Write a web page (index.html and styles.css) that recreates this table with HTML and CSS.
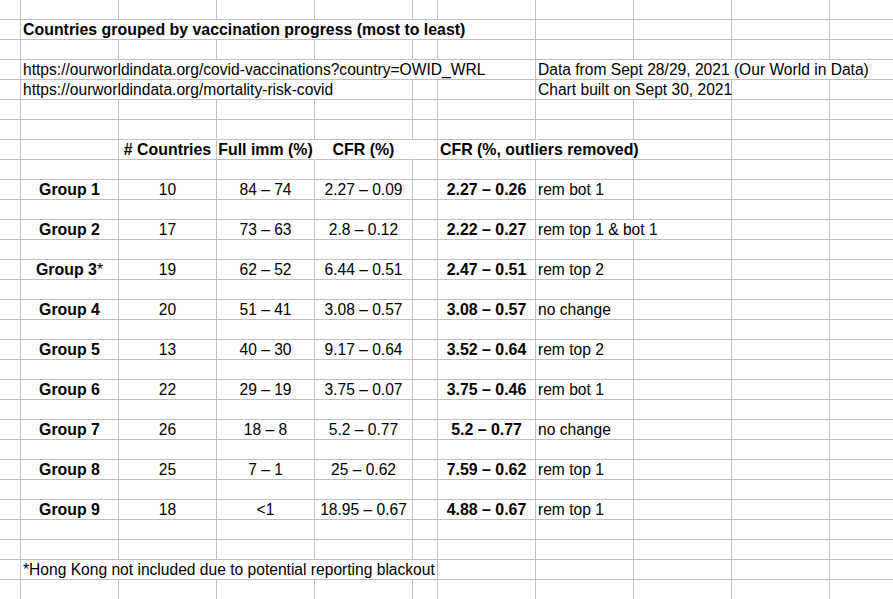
FILE: index.html
```html
<!DOCTYPE html>
<html lang="en">
<head>
<meta charset="utf-8">
<title>Countries grouped by vaccination progress</title>
<link rel="stylesheet" href="styles.css">
</head>
<body>
<div class="sheet">
  <!-- row 1 -->
  <div class="c"></div><div class="c"></div><div class="c"></div><div class="c"></div><div class="c"></div><div class="c"></div><div class="c"></div><div class="c"></div><div class="c"></div><div class="c"></div><div class="c"></div>
  <!-- row 2 -->
  <div class="c"></div><div class="c s6 b">Countries grouped by vaccination progress (most to least)</div><div class="c"></div><div class="c"></div><div class="c"></div><div class="c"></div>
  <!-- row 3 -->
  <div class="c"></div><div class="c"></div><div class="c"></div><div class="c"></div><div class="c"></div><div class="c"></div><div class="c"></div><div class="c"></div><div class="c"></div><div class="c"></div><div class="c"></div>
  <!-- row 4 -->
  <div class="c"></div><div class="c s6">https://ourworldindata.org/covid-vaccinations?country=OWID_WRL</div><div class="c s4">Data from Sept 28/29, 2021 (Our World in Data)</div>
  <!-- row 5 -->
  <div class="c"></div><div class="c s4">https://ourworldindata.org/mortality-risk-covid</div><div class="c"></div><div class="c"></div><div class="c s2">Chart built on Sept 30, 2021</div><div class="c"></div><div class="c"></div>
  <!-- row 6 -->
  <div class="c"></div><div class="c"></div><div class="c"></div><div class="c"></div><div class="c"></div><div class="c"></div><div class="c"></div><div class="c"></div><div class="c"></div><div class="c"></div><div class="c"></div>
  <!-- row 7 -->
  <div class="c"></div><div class="c"></div><div class="c"></div><div class="c"></div><div class="c"></div><div class="c"></div><div class="c"></div><div class="c"></div><div class="c"></div><div class="c"></div><div class="c"></div>
  <!-- row 8: header -->
  <div class="c"></div><div class="c"></div><div class="c b m"># Countries</div><div class="c b m nr">Full imm (%)</div><div class="c b m nr">CFR (%)</div><div class="c"></div><div class="c s3 b">CFR (%, outliers removed)</div><div class="c"></div><div class="c"></div>
  <!-- row 9 -->
  <div class="c"></div><div class="c"></div><div class="c"></div><div class="c"></div><div class="c"></div><div class="c"></div><div class="c"></div><div class="c"></div><div class="c"></div><div class="c"></div><div class="c"></div>
  <!-- Group 1 -->
  <div class="c"></div><div class="c b m">Group 1</div><div class="c m">10</div><div class="c m">84 – 74</div><div class="c m">2.27 – 0.09</div><div class="c"></div><div class="c b m">2.27 – 0.26</div><div class="c">rem bot 1</div><div class="c"></div><div class="c"></div><div class="c"></div>
  <div class="c"></div><div class="c"></div><div class="c"></div><div class="c"></div><div class="c"></div><div class="c"></div><div class="c"></div><div class="c"></div><div class="c"></div><div class="c"></div><div class="c"></div>
  <!-- Group 2 -->
  <div class="c"></div><div class="c b m">Group 2</div><div class="c m">17</div><div class="c m">73 – 63</div><div class="c m">2.8 – 0.12</div><div class="c"></div><div class="c b m">2.22 – 0.27</div><div class="c s2">rem top 1 &amp; bot 1</div><div class="c"></div><div class="c"></div>
  <div class="c"></div><div class="c"></div><div class="c"></div><div class="c"></div><div class="c"></div><div class="c"></div><div class="c"></div><div class="c"></div><div class="c"></div><div class="c"></div><div class="c"></div>
  <!-- Group 3 -->
  <div class="c"></div><div class="c b m">Group 3<span class="n">*</span></div><div class="c m">19</div><div class="c m">62 – 52</div><div class="c m">6.44 – 0.51</div><div class="c"></div><div class="c b m">2.47 – 0.51</div><div class="c">rem top 2</div><div class="c"></div><div class="c"></div><div class="c"></div>
  <div class="c"></div><div class="c"></div><div class="c"></div><div class="c"></div><div class="c"></div><div class="c"></div><div class="c"></div><div class="c"></div><div class="c"></div><div class="c"></div><div class="c"></div>
  <!-- Group 4 -->
  <div class="c"></div><div class="c b m">Group 4</div><div class="c m">20</div><div class="c m">51 – 41</div><div class="c m">3.08 – 0.57</div><div class="c"></div><div class="c b m">3.08 – 0.57</div><div class="c">no change</div><div class="c"></div><div class="c"></div><div class="c"></div>
  <div class="c"></div><div class="c"></div><div class="c"></div><div class="c"></div><div class="c"></div><div class="c"></div><div class="c"></div><div class="c"></div><div class="c"></div><div class="c"></div><div class="c"></div>
  <!-- Group 5 -->
  <div class="c"></div><div class="c b m">Group 5</div><div class="c m">13</div><div class="c m">40 – 30</div><div class="c m">9.17 – 0.64</div><div class="c"></div><div class="c b m">3.52 – 0.64</div><div class="c">rem top 2</div><div class="c"></div><div class="c"></div><div class="c"></div>
  <div class="c"></div><div class="c"></div><div class="c"></div><div class="c"></div><div class="c"></div><div class="c"></div><div class="c"></div><div class="c"></div><div class="c"></div><div class="c"></div><div class="c"></div>
  <!-- Group 6 -->
  <div class="c"></div><div class="c b m">Group 6</div><div class="c m">22</div><div class="c m">29 – 19</div><div class="c m">3.75 – 0.07</div><div class="c"></div><div class="c b m">3.75 – 0.46</div><div class="c">rem bot 1</div><div class="c"></div><div class="c"></div><div class="c"></div>
  <div class="c"></div><div class="c"></div><div class="c"></div><div class="c"></div><div class="c"></div><div class="c"></div><div class="c"></div><div class="c"></div><div class="c"></div><div class="c"></div><div class="c"></div>
  <!-- Group 7 -->
  <div class="c"></div><div class="c b m">Group 7</div><div class="c m">26</div><div class="c m">18 – 8</div><div class="c m">5.2 – 0.77</div><div class="c"></div><div class="c b m">5.2 – 0.77</div><div class="c">no change</div><div class="c"></div><div class="c"></div><div class="c"></div>
  <div class="c"></div><div class="c"></div><div class="c"></div><div class="c"></div><div class="c"></div><div class="c"></div><div class="c"></div><div class="c"></div><div class="c"></div><div class="c"></div><div class="c"></div>
  <!-- Group 8 -->
  <div class="c"></div><div class="c b m">Group 8</div><div class="c m">25</div><div class="c m">7 – 1</div><div class="c m">25 – 0.62</div><div class="c"></div><div class="c b m">7.59 – 0.62</div><div class="c">rem top 1</div><div class="c"></div><div class="c"></div><div class="c"></div>
  <div class="c"></div><div class="c"></div><div class="c"></div><div class="c"></div><div class="c"></div><div class="c"></div><div class="c"></div><div class="c"></div><div class="c"></div><div class="c"></div><div class="c"></div>
  <!-- Group 9 -->
  <div class="c"></div><div class="c b m">Group 9</div><div class="c m">18</div><div class="c m">&lt;1</div><div class="c m">18.95 – 0.67</div><div class="c"></div><div class="c b m">4.88 – 0.67</div><div class="c">rem top 1</div><div class="c"></div><div class="c"></div><div class="c"></div>
  <!-- rows 27-28 -->
  <div class="c"></div><div class="c"></div><div class="c"></div><div class="c"></div><div class="c"></div><div class="c"></div><div class="c"></div><div class="c"></div><div class="c"></div><div class="c"></div><div class="c"></div>
  <div class="c"></div><div class="c"></div><div class="c"></div><div class="c"></div><div class="c"></div><div class="c"></div><div class="c"></div><div class="c"></div><div class="c"></div><div class="c"></div><div class="c"></div>
  <!-- row 29: footnote -->
  <div class="c"></div><div class="c s5">*Hong Kong not included due to potential reporting blackout</div><div class="c"></div><div class="c"></div><div class="c"></div><div class="c"></div><div class="c"></div>
  <!-- row 30 -->
  <div class="c"></div><div class="c"></div><div class="c"></div><div class="c"></div><div class="c"></div><div class="c"></div><div class="c"></div><div class="c"></div><div class="c"></div><div class="c"></div><div class="c"></div>
</div>
</body>
</html>
```
FILE: styles.css
```css
html, body {
  margin: 0;
  padding: 0;
  background: #ffffff;
  overflow: hidden;
}

.sheet {
  display: grid;
  grid-template-columns: 21px 98px 98px 98px 98px 25px 98px 98px 98px 98px 98px;
  grid-auto-rows: 20px;
  width: max-content;
  font-family: "Liberation Sans", Arial, sans-serif;
  font-size: 15.6px;
  color: #000000;
}

.c {
  box-sizing: border-box;
  border-right: 1px solid #c0c0c0;
  border-bottom: 1px solid #c0c0c0;
  padding: 0 2px;
  line-height: 19px;
  white-space: nowrap;
  overflow: visible;
}

.b {
  font-weight: bold;
  font-size: 15.9px;
}

.m {
  text-align: center;
  padding: 0;
}

.nr {
  border-right-color: transparent;
}

.n {
  font-weight: normal;
  font-size: 15.6px;
}

.s2 { grid-column: span 2; }
.s3 { grid-column: span 3; }
.s4 { grid-column: span 4; }
.s5 { grid-column: span 5; }
.s6 { grid-column: span 6; }
```
